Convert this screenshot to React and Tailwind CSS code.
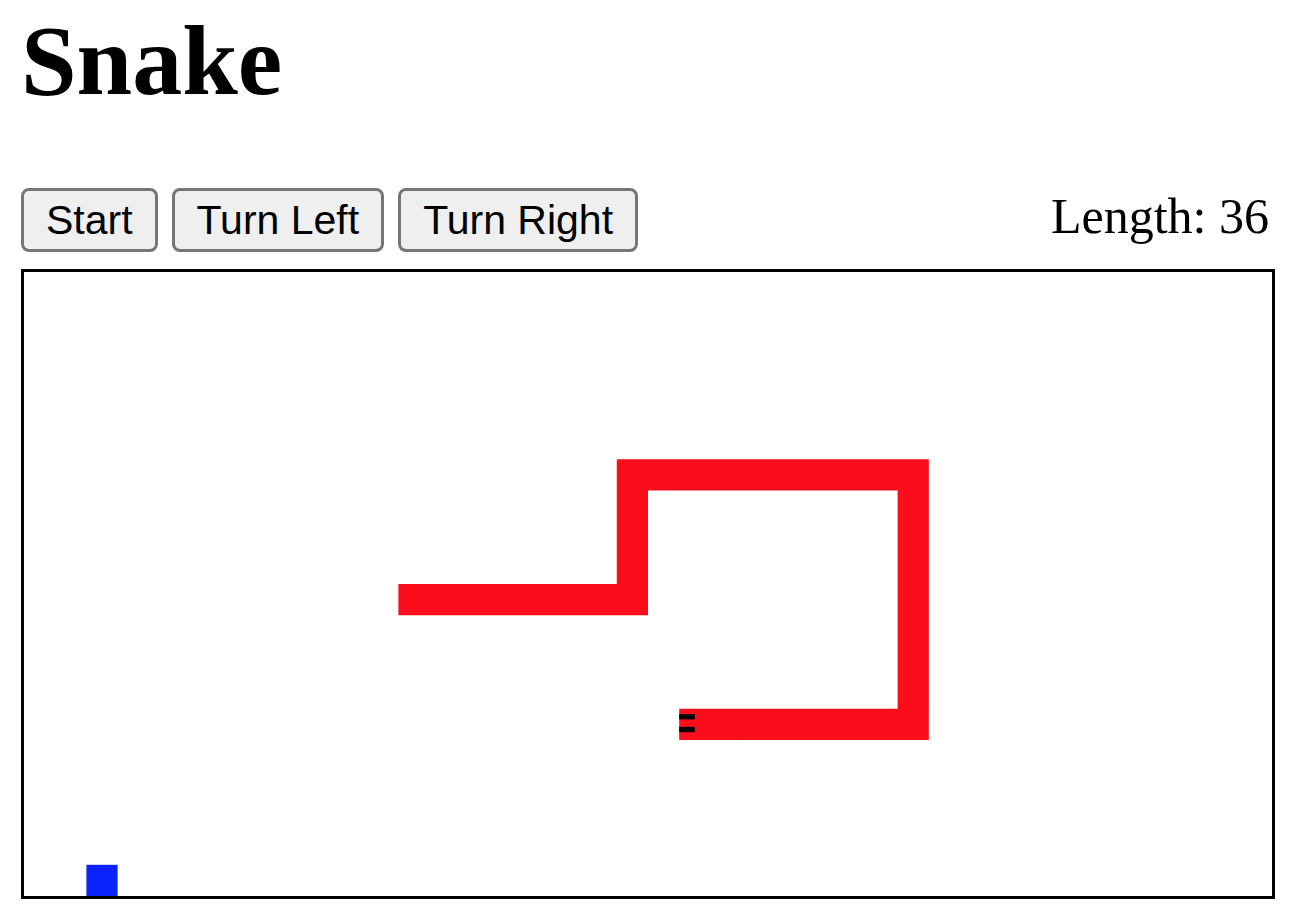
import React from "react";

const COLS = 40;
const ROWS = 20;

// snake body, head first, built from straight runs
function buildSnake() {
  const cells = [];
  const push = (x, y) => cells.push([x, y]);
  for (let x = 21; x <= 28; x++) push(x, 14);
  for (let y = 13; y >= 6; y--) push(28, y);
  for (let x = 27; x >= 19; x--) push(x, 6);
  for (let y = 7; y <= 10; y++) push(19, y);
  for (let x = 18; x >= 12; x--) push(x, 10);
  return cells;
}

const snake = buildSnake();
const food = [2, 19];

// one path for the whole body so no seams show between cells
const bodyPath = snake.map(([x, y]) => `M${x} ${y}h1v1h-1z`).join("");

function Board() {
  const [hx, hy] = snake[0];
  return (
    <div className="w-[1254px] h-[630px] border-[3px] border-black bg-white">
      <svg
        width="1248"
        height="624"
        viewBox={`0 0 ${COLS} ${ROWS}`}
        preserveAspectRatio="none"
        className="block"
      >
        <path d={bodyPath} fill="#fc0d1b" />
        {/* eyes, facing left */}
        <rect x={hx} y={hy + 0.17} width="0.5" height="0.17" fill="#000" />
        <rect x={hx} y={hy + 0.58} width="0.5" height="0.17" fill="#000" />
        <rect x={food[0]} y={food[1]} width="1" height="1" fill="#0b22fc" />
      </svg>
    </div>
  );
}

export default function App() {
  const btn =
    "bg-[#efefef] border-[3px] border-[#767676] rounded-[8px] px-[22px] py-[6px] text-[41px] leading-[46px] text-black font-['Liberation_Sans',Arial,sans-serif]";

  return (
    <div className="min-h-screen bg-white pl-[21px] pt-[11px] font-['Liberation_Serif','Times_New_Roman',serif] text-black">
      <h1 className="text-[100px] leading-[100px] font-bold">Snake</h1>

      <div className="w-[1254px] mt-[77px] flex items-center justify-between">
        <div className="flex gap-[14px]">
          <button className={btn}>Start</button>
          <button className={btn}>Turn Left</button>
          <button className={btn}>Turn Right</button>
        </div>
        <div className="text-[50px] leading-[55px] pr-[6px] -mt-[8px]">Length: 36</div>
      </div>

      <div className="mt-[17px]">
        <Board />
      </div>
    </div>
  );
}
